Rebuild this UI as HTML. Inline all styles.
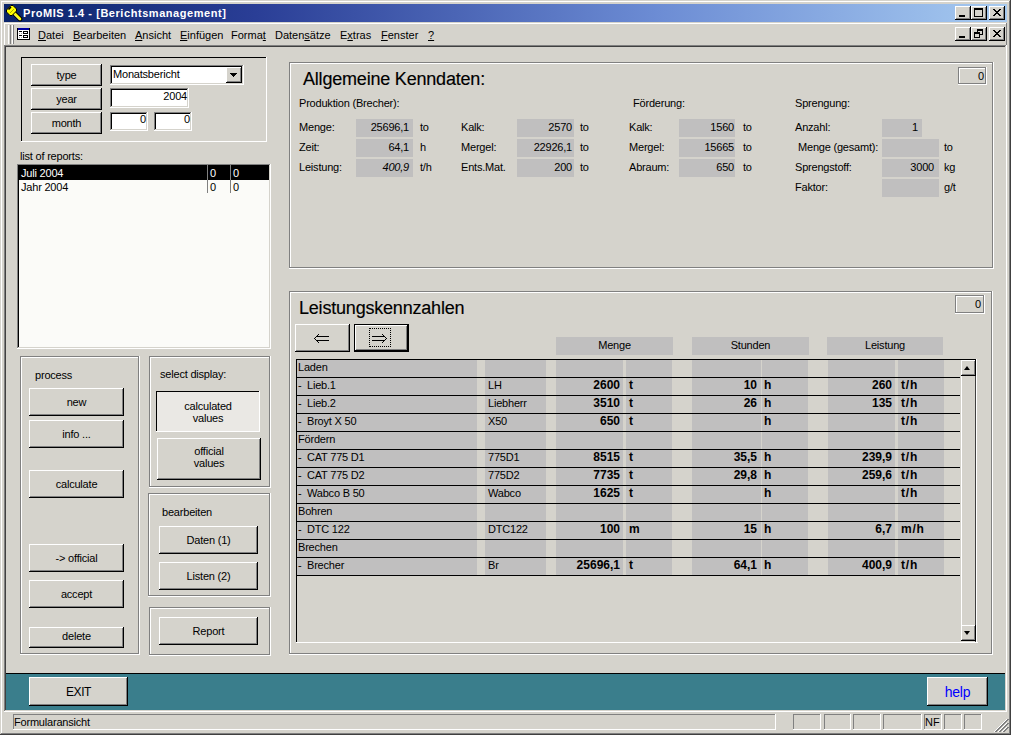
<!DOCTYPE html>
<html><head><meta charset="utf-8"><style>
html,body{margin:0;padding:0;}
body{width:1011px;height:735px;overflow:hidden;position:relative;background:#D5D3CC;font-family:"Liberation Sans", sans-serif;}
body div{position:absolute;}
u{text-decoration:underline;}
</style></head><body>
<div style="left:0px;top:0px;width:1011px;height:735px;background:#D5D3CC;"></div>
<div style="left:1px;top:1px;width:1008px;height:1px;background:#FFFFFF;"></div>
<div style="left:1px;top:1px;width:1px;height:732px;background:#FFFFFF;"></div>
<div style="left:1009px;top:1px;width:1px;height:733px;background:#808080;"></div>
<div style="left:1px;top:733px;width:1009px;height:1px;background:#808080;"></div>
<div style="left:1010px;top:0px;width:1px;height:735px;background:#404040;"></div>
<div style="left:0px;top:734px;width:1011px;height:1px;background:#404040;"></div>
<div style="left:4px;top:4px;width:1003px;height:18px;background:linear-gradient(to right,#0A246A 0%,rgb(42,62,150) 25%,rgb(108,140,212) 65%,#A6CAF0 100%);"></div>
<div style="left:23px;top:6px;font-size:11px;line-height:14px;color:#FFFFFF;font-weight:bold;white-space:nowrap;letter-spacing:0.55px;">ProMIS 1.4 - [Berichtsmanagement]</div>
<div style="left:955px;top:6px;width:16px;height:14px;background:#D5D3CC;"></div>
<div style="left:955px;top:6px;width:16px;height:1px;background:#FFFFFF;"></div>
<div style="left:955px;top:6px;width:1px;height:14px;background:#FFFFFF;"></div>
<div style="left:955px;top:19px;width:16px;height:1px;background:#000;"></div>
<div style="left:970px;top:6px;width:1px;height:14px;background:#000;"></div>
<div style="left:956px;top:18px;width:14px;height:1px;background:#808080;"></div>
<div style="left:969px;top:7px;width:1px;height:12px;background:#808080;"></div>
<div style="left:955px;top:27px;width:16px;height:14px;background:#D5D3CC;"></div>
<div style="left:955px;top:27px;width:16px;height:1px;background:#FFFFFF;"></div>
<div style="left:955px;top:27px;width:1px;height:14px;background:#FFFFFF;"></div>
<div style="left:955px;top:40px;width:16px;height:1px;background:#000;"></div>
<div style="left:970px;top:27px;width:1px;height:14px;background:#000;"></div>
<div style="left:956px;top:39px;width:14px;height:1px;background:#808080;"></div>
<div style="left:969px;top:28px;width:1px;height:12px;background:#808080;"></div>
<div style="left:971px;top:6px;width:16px;height:14px;background:#D5D3CC;"></div>
<div style="left:971px;top:6px;width:16px;height:1px;background:#FFFFFF;"></div>
<div style="left:971px;top:6px;width:1px;height:14px;background:#FFFFFF;"></div>
<div style="left:971px;top:19px;width:16px;height:1px;background:#000;"></div>
<div style="left:986px;top:6px;width:1px;height:14px;background:#000;"></div>
<div style="left:972px;top:18px;width:14px;height:1px;background:#808080;"></div>
<div style="left:985px;top:7px;width:1px;height:12px;background:#808080;"></div>
<div style="left:971px;top:27px;width:16px;height:14px;background:#D5D3CC;"></div>
<div style="left:971px;top:27px;width:16px;height:1px;background:#FFFFFF;"></div>
<div style="left:971px;top:27px;width:1px;height:14px;background:#FFFFFF;"></div>
<div style="left:971px;top:40px;width:16px;height:1px;background:#000;"></div>
<div style="left:986px;top:27px;width:1px;height:14px;background:#000;"></div>
<div style="left:972px;top:39px;width:14px;height:1px;background:#808080;"></div>
<div style="left:985px;top:28px;width:1px;height:12px;background:#808080;"></div>
<div style="left:989px;top:6px;width:16px;height:14px;background:#D5D3CC;"></div>
<div style="left:989px;top:6px;width:16px;height:1px;background:#FFFFFF;"></div>
<div style="left:989px;top:6px;width:1px;height:14px;background:#FFFFFF;"></div>
<div style="left:989px;top:19px;width:16px;height:1px;background:#000;"></div>
<div style="left:1004px;top:6px;width:1px;height:14px;background:#000;"></div>
<div style="left:990px;top:18px;width:14px;height:1px;background:#808080;"></div>
<div style="left:1003px;top:7px;width:1px;height:12px;background:#808080;"></div>
<div style="left:989px;top:27px;width:16px;height:14px;background:#D5D3CC;"></div>
<div style="left:989px;top:27px;width:16px;height:1px;background:#FFFFFF;"></div>
<div style="left:989px;top:27px;width:1px;height:14px;background:#FFFFFF;"></div>
<div style="left:989px;top:40px;width:16px;height:1px;background:#000;"></div>
<div style="left:1004px;top:27px;width:1px;height:14px;background:#000;"></div>
<div style="left:990px;top:39px;width:14px;height:1px;background:#808080;"></div>
<div style="left:1003px;top:28px;width:1px;height:12px;background:#808080;"></div>
<div style="left:4px;top:23px;width:1002px;height:1px;background:#FFFFFF;"></div>
<div style="left:1006px;top:23px;width:1px;height:22px;background:#808080;"></div>
<div style="left:38px;top:29px;font-size:11px;line-height:13px;color:#000;font-weight:normal;white-space:nowrap;"><u>D</u>atei</div>
<div style="left:73px;top:29px;font-size:11px;line-height:13px;color:#000;font-weight:normal;white-space:nowrap;"><u>B</u>earbeiten</div>
<div style="left:135px;top:29px;font-size:11px;line-height:13px;color:#000;font-weight:normal;white-space:nowrap;"><u>A</u>nsicht</div>
<div style="left:180px;top:29px;font-size:11px;line-height:13px;color:#000;font-weight:normal;white-space:nowrap;"><u>E</u>infügen</div>
<div style="left:231px;top:29px;font-size:11px;line-height:13px;color:#000;font-weight:normal;white-space:nowrap;">Forma<u>t</u></div>
<div style="left:275px;top:29px;font-size:11px;line-height:13px;color:#000;font-weight:normal;white-space:nowrap;">Daten<u>s</u>ätze</div>
<div style="left:340px;top:29px;font-size:11px;line-height:13px;color:#000;font-weight:normal;white-space:nowrap;">E<u>x</u>tras</div>
<div style="left:381px;top:29px;font-size:11px;line-height:13px;color:#000;font-weight:normal;white-space:nowrap;"><u>F</u>enster</div>
<div style="left:428px;top:29px;font-size:11px;line-height:13px;color:#000;font-weight:normal;white-space:nowrap;"><u>?</u></div>
<div style="left:4px;top:23px;width:1px;height:22px;background:#FFFFFF;"></div>
<div style="left:8px;top:25px;width:1px;height:19px;background:#FFFFFF;"></div>
<div style="left:10px;top:25px;width:1px;height:19px;background:#808080;"></div>
<div style="left:12px;top:25px;width:1px;height:19px;background:#FFFFFF;"></div>
<div style="left:13px;top:25px;width:1px;height:19px;background:#808080;"></div>
<div style="left:4px;top:45px;width:1002px;height:1px;background:#808080;"></div>
<div style="left:4px;top:45px;width:1px;height:667px;background:#808080;"></div>
<div style="left:5px;top:46px;width:1000px;height:1px;background:#404040;"></div>
<div style="left:5px;top:46px;width:1px;height:664px;background:#404040;"></div>
<div style="left:1006px;top:45px;width:1px;height:667px;background:#FFFFFF;"></div>
<div style="left:4px;top:711px;width:1003px;height:1px;background:#FFFFFF;"></div>
<div style="left:21px;top:57px;width:246px;height:1px;background:#000;"></div>
<div style="left:21px;top:57px;width:1px;height:85px;background:#000;"></div>
<div style="left:21px;top:141px;width:246px;height:1px;background:#FFFFFF;"></div>
<div style="left:266px;top:57px;width:1px;height:85px;background:#FFFFFF;"></div>
<div style="left:31px;top:64px;width:71px;height:22px;background:#D5D3CC;"></div>
<div style="left:31px;top:64px;width:71px;height:1px;background:#FFFFFF;"></div>
<div style="left:31px;top:64px;width:1px;height:22px;background:#FFFFFF;"></div>
<div style="left:31px;top:85px;width:71px;height:1px;background:#000;"></div>
<div style="left:101px;top:64px;width:1px;height:22px;background:#000;"></div>
<div style="left:32px;top:84px;width:69px;height:1px;background:#808080;"></div>
<div style="left:100px;top:65px;width:1px;height:20px;background:#808080;"></div>
<div style="left:31px;top:68px;width:71px;text-align:center;font-size:11px;line-height:14px;color:#000;font-weight:normal;white-space:nowrap;letter-spacing:-0.2px;">type</div>
<div style="left:31px;top:88px;width:71px;height:22px;background:#D5D3CC;"></div>
<div style="left:31px;top:88px;width:71px;height:1px;background:#FFFFFF;"></div>
<div style="left:31px;top:88px;width:1px;height:22px;background:#FFFFFF;"></div>
<div style="left:31px;top:109px;width:71px;height:1px;background:#000;"></div>
<div style="left:101px;top:88px;width:1px;height:22px;background:#000;"></div>
<div style="left:32px;top:108px;width:69px;height:1px;background:#808080;"></div>
<div style="left:100px;top:89px;width:1px;height:20px;background:#808080;"></div>
<div style="left:31px;top:92px;width:71px;text-align:center;font-size:11px;line-height:14px;color:#000;font-weight:normal;white-space:nowrap;letter-spacing:-0.2px;">year</div>
<div style="left:31px;top:112px;width:71px;height:22px;background:#D5D3CC;"></div>
<div style="left:31px;top:112px;width:71px;height:1px;background:#FFFFFF;"></div>
<div style="left:31px;top:112px;width:1px;height:22px;background:#FFFFFF;"></div>
<div style="left:31px;top:133px;width:71px;height:1px;background:#000;"></div>
<div style="left:101px;top:112px;width:1px;height:22px;background:#000;"></div>
<div style="left:32px;top:132px;width:69px;height:1px;background:#808080;"></div>
<div style="left:100px;top:113px;width:1px;height:20px;background:#808080;"></div>
<div style="left:31px;top:116px;width:71px;text-align:center;font-size:11px;line-height:14px;color:#000;font-weight:normal;white-space:nowrap;letter-spacing:-0.2px;">month</div>
<div style="left:110px;top:65px;width:134px;height:20px;background:#FFFFFF;"></div>
<div style="left:110px;top:65px;width:134px;height:1px;background:#808080;"></div>
<div style="left:110px;top:65px;width:1px;height:20px;background:#808080;"></div>
<div style="left:110px;top:84px;width:134px;height:1px;background:#FFFFFF;"></div>
<div style="left:243px;top:65px;width:1px;height:20px;background:#FFFFFF;"></div>
<div style="left:111px;top:66px;width:132px;height:1px;background:#000;"></div>
<div style="left:111px;top:66px;width:1px;height:18px;background:#000;"></div>
<div style="left:111px;top:83px;width:132px;height:1px;background:#D5D3CC;"></div>
<div style="left:242px;top:66px;width:1px;height:18px;background:#D5D3CC;"></div>
<div style="left:113px;top:67px;font-size:11px;line-height:14px;color:#000;font-weight:normal;white-space:nowrap;letter-spacing:-0.2px;">Monatsbericht</div>
<div style="left:226px;top:67px;width:16px;height:16px;background:#D5D3CC;"></div>
<div style="left:226px;top:67px;width:16px;height:1px;background:#FFFFFF;"></div>
<div style="left:226px;top:67px;width:1px;height:16px;background:#FFFFFF;"></div>
<div style="left:226px;top:82px;width:16px;height:1px;background:#000;"></div>
<div style="left:241px;top:67px;width:1px;height:16px;background:#000;"></div>
<div style="left:227px;top:81px;width:14px;height:1px;background:#808080;"></div>
<div style="left:240px;top:68px;width:1px;height:14px;background:#808080;"></div>
<svg style="position:absolute;left:230px;top:73px" width="7" height="4" viewBox="0 0 7 4" shape-rendering="crispEdges"><rect x="0" y="0" width="7" height="1" fill="#000"/><rect x="1" y="1" width="5" height="1" fill="#000"/><rect x="2" y="2" width="3" height="1" fill="#000"/><rect x="3" y="3" width="1" height="1" fill="#000"/></svg>
<div style="left:110px;top:88px;width:79px;height:20px;background:#FFFFFF;"></div>
<div style="left:110px;top:88px;width:79px;height:1px;background:#808080;"></div>
<div style="left:110px;top:88px;width:1px;height:20px;background:#808080;"></div>
<div style="left:110px;top:107px;width:79px;height:1px;background:#FFFFFF;"></div>
<div style="left:188px;top:88px;width:1px;height:20px;background:#FFFFFF;"></div>
<div style="left:111px;top:89px;width:77px;height:1px;background:#000;"></div>
<div style="left:111px;top:89px;width:1px;height:18px;background:#000;"></div>
<div style="left:111px;top:106px;width:77px;height:1px;background:#D5D3CC;"></div>
<div style="left:187px;top:89px;width:1px;height:18px;background:#D5D3CC;"></div>
<div style="left:-213px;top:89px;width:400px;text-align:right;font-size:11px;line-height:14px;color:#000;font-weight:normal;white-space:nowrap;letter-spacing:-0.2px;">2004</div>
<div style="left:110px;top:112px;width:38px;height:19px;background:#FFFFFF;"></div>
<div style="left:110px;top:112px;width:38px;height:1px;background:#808080;"></div>
<div style="left:110px;top:112px;width:1px;height:19px;background:#808080;"></div>
<div style="left:110px;top:130px;width:38px;height:1px;background:#FFFFFF;"></div>
<div style="left:147px;top:112px;width:1px;height:19px;background:#FFFFFF;"></div>
<div style="left:111px;top:113px;width:36px;height:1px;background:#000;"></div>
<div style="left:111px;top:113px;width:1px;height:17px;background:#000;"></div>
<div style="left:111px;top:129px;width:36px;height:1px;background:#D5D3CC;"></div>
<div style="left:146px;top:113px;width:1px;height:17px;background:#D5D3CC;"></div>
<div style="left:-254px;top:112px;width:400px;text-align:right;font-size:11px;line-height:14px;color:#000;font-weight:normal;white-space:nowrap;letter-spacing:-0.2px;">0</div>
<div style="left:154px;top:112px;width:38px;height:19px;background:#FFFFFF;"></div>
<div style="left:154px;top:112px;width:38px;height:1px;background:#808080;"></div>
<div style="left:154px;top:112px;width:1px;height:19px;background:#808080;"></div>
<div style="left:154px;top:130px;width:38px;height:1px;background:#FFFFFF;"></div>
<div style="left:191px;top:112px;width:1px;height:19px;background:#FFFFFF;"></div>
<div style="left:155px;top:113px;width:36px;height:1px;background:#000;"></div>
<div style="left:155px;top:113px;width:1px;height:17px;background:#000;"></div>
<div style="left:155px;top:129px;width:36px;height:1px;background:#D5D3CC;"></div>
<div style="left:190px;top:113px;width:1px;height:17px;background:#D5D3CC;"></div>
<div style="left:-210px;top:112px;width:400px;text-align:right;font-size:11px;line-height:14px;color:#000;font-weight:normal;white-space:nowrap;letter-spacing:-0.2px;">0</div>
<div style="left:20px;top:149px;font-size:11px;line-height:14px;color:#000;font-weight:normal;white-space:nowrap;letter-spacing:-0.2px;">list of reports:</div>
<div style="left:17px;top:164px;width:254px;height:185px;background:#FBFBF8;"></div>
<div style="left:17px;top:164px;width:254px;height:1px;background:#808080;"></div>
<div style="left:17px;top:164px;width:1px;height:185px;background:#808080;"></div>
<div style="left:17px;top:348px;width:254px;height:1px;background:#FFFFFF;"></div>
<div style="left:270px;top:164px;width:1px;height:185px;background:#FFFFFF;"></div>
<div style="left:18px;top:165px;width:252px;height:1px;background:#000;"></div>
<div style="left:18px;top:165px;width:1px;height:183px;background:#000;"></div>
<div style="left:18px;top:347px;width:252px;height:1px;background:#D5D3CC;"></div>
<div style="left:269px;top:165px;width:1px;height:183px;background:#D5D3CC;"></div>
<div style="left:19px;top:166px;width:250px;height:14px;background:#000;"></div>
<div style="left:21px;top:166px;font-size:11px;line-height:14px;color:#FFFFFF;font-weight:normal;white-space:nowrap;letter-spacing:-0.2px;">Juli 2004</div>
<div style="left:21px;top:180px;font-size:11px;line-height:14px;color:#000;font-weight:normal;white-space:nowrap;letter-spacing:-0.2px;">Jahr 2004</div>
<div style="left:207px;top:165px;width:1px;height:28px;background:#808080;"></div>
<div style="left:230px;top:165px;width:1px;height:28px;background:#808080;"></div>
<div style="left:210px;top:166px;font-size:11px;line-height:14px;color:#FFFFFF;font-weight:normal;white-space:nowrap;letter-spacing:-0.2px;">0</div>
<div style="left:233px;top:166px;font-size:11px;line-height:14px;color:#FFFFFF;font-weight:normal;white-space:nowrap;letter-spacing:-0.2px;">0</div>
<div style="left:210px;top:180px;font-size:11px;line-height:14px;color:#000;font-weight:normal;white-space:nowrap;letter-spacing:-0.2px;">0</div>
<div style="left:233px;top:180px;font-size:11px;line-height:14px;color:#000;font-weight:normal;white-space:nowrap;letter-spacing:-0.2px;">0</div>
<div style="left:20px;top:356px;width:120px;height:1px;background:#808080;"></div>
<div style="left:20px;top:356px;width:1px;height:299px;background:#808080;"></div>
<div style="left:20px;top:654px;width:120px;height:1px;background:#FFFFFF;"></div>
<div style="left:139px;top:356px;width:1px;height:299px;background:#FFFFFF;"></div>
<div style="left:21px;top:357px;width:118px;height:1px;background:#FFFFFF;"></div>
<div style="left:21px;top:357px;width:1px;height:297px;background:#FFFFFF;"></div>
<div style="left:21px;top:653px;width:118px;height:1px;background:#808080;"></div>
<div style="left:138px;top:357px;width:1px;height:297px;background:#808080;"></div>
<div style="left:35px;top:368px;font-size:11px;line-height:14px;color:#000;font-weight:normal;white-space:nowrap;letter-spacing:-0.2px;">process</div>
<div style="left:29px;top:388px;width:95px;height:28px;background:#D5D3CC;"></div>
<div style="left:29px;top:388px;width:95px;height:1px;background:#FFFFFF;"></div>
<div style="left:29px;top:388px;width:1px;height:28px;background:#FFFFFF;"></div>
<div style="left:29px;top:415px;width:95px;height:1px;background:#000;"></div>
<div style="left:123px;top:388px;width:1px;height:28px;background:#000;"></div>
<div style="left:30px;top:414px;width:93px;height:1px;background:#808080;"></div>
<div style="left:122px;top:389px;width:1px;height:26px;background:#808080;"></div>
<div style="left:29px;top:395px;width:95px;text-align:center;font-size:11px;line-height:14px;color:#000;font-weight:normal;white-space:nowrap;letter-spacing:-0.2px;">new</div>
<div style="left:29px;top:420px;width:95px;height:28px;background:#D5D3CC;"></div>
<div style="left:29px;top:420px;width:95px;height:1px;background:#FFFFFF;"></div>
<div style="left:29px;top:420px;width:1px;height:28px;background:#FFFFFF;"></div>
<div style="left:29px;top:447px;width:95px;height:1px;background:#000;"></div>
<div style="left:123px;top:420px;width:1px;height:28px;background:#000;"></div>
<div style="left:30px;top:446px;width:93px;height:1px;background:#808080;"></div>
<div style="left:122px;top:421px;width:1px;height:26px;background:#808080;"></div>
<div style="left:29px;top:427px;width:95px;text-align:center;font-size:11px;line-height:14px;color:#000;font-weight:normal;white-space:nowrap;letter-spacing:-0.2px;">info ...</div>
<div style="left:29px;top:470px;width:95px;height:28px;background:#D5D3CC;"></div>
<div style="left:29px;top:470px;width:95px;height:1px;background:#FFFFFF;"></div>
<div style="left:29px;top:470px;width:1px;height:28px;background:#FFFFFF;"></div>
<div style="left:29px;top:497px;width:95px;height:1px;background:#000;"></div>
<div style="left:123px;top:470px;width:1px;height:28px;background:#000;"></div>
<div style="left:30px;top:496px;width:93px;height:1px;background:#808080;"></div>
<div style="left:122px;top:471px;width:1px;height:26px;background:#808080;"></div>
<div style="left:29px;top:477px;width:95px;text-align:center;font-size:11px;line-height:14px;color:#000;font-weight:normal;white-space:nowrap;letter-spacing:-0.2px;">calculate</div>
<div style="left:29px;top:544px;width:95px;height:28px;background:#D5D3CC;"></div>
<div style="left:29px;top:544px;width:95px;height:1px;background:#FFFFFF;"></div>
<div style="left:29px;top:544px;width:1px;height:28px;background:#FFFFFF;"></div>
<div style="left:29px;top:571px;width:95px;height:1px;background:#000;"></div>
<div style="left:123px;top:544px;width:1px;height:28px;background:#000;"></div>
<div style="left:30px;top:570px;width:93px;height:1px;background:#808080;"></div>
<div style="left:122px;top:545px;width:1px;height:26px;background:#808080;"></div>
<div style="left:29px;top:551px;width:95px;text-align:center;font-size:11px;line-height:14px;color:#000;font-weight:normal;white-space:nowrap;letter-spacing:-0.2px;">-&gt; official</div>
<div style="left:29px;top:580px;width:95px;height:28px;background:#D5D3CC;"></div>
<div style="left:29px;top:580px;width:95px;height:1px;background:#FFFFFF;"></div>
<div style="left:29px;top:580px;width:1px;height:28px;background:#FFFFFF;"></div>
<div style="left:29px;top:607px;width:95px;height:1px;background:#000;"></div>
<div style="left:123px;top:580px;width:1px;height:28px;background:#000;"></div>
<div style="left:30px;top:606px;width:93px;height:1px;background:#808080;"></div>
<div style="left:122px;top:581px;width:1px;height:26px;background:#808080;"></div>
<div style="left:29px;top:587px;width:95px;text-align:center;font-size:11px;line-height:14px;color:#000;font-weight:normal;white-space:nowrap;letter-spacing:-0.2px;">accept</div>
<div style="left:29px;top:627px;width:95px;height:21px;background:#D5D3CC;"></div>
<div style="left:29px;top:627px;width:95px;height:1px;background:#FFFFFF;"></div>
<div style="left:29px;top:627px;width:1px;height:21px;background:#FFFFFF;"></div>
<div style="left:29px;top:647px;width:95px;height:1px;background:#000;"></div>
<div style="left:123px;top:627px;width:1px;height:21px;background:#000;"></div>
<div style="left:30px;top:646px;width:93px;height:1px;background:#808080;"></div>
<div style="left:122px;top:628px;width:1px;height:19px;background:#808080;"></div>
<div style="left:29px;top:629px;width:95px;text-align:center;font-size:11px;line-height:14px;color:#000;font-weight:normal;white-space:nowrap;letter-spacing:-0.2px;">delete</div>
<div style="left:149px;top:356px;width:122px;height:1px;background:#808080;"></div>
<div style="left:149px;top:356px;width:1px;height:132px;background:#808080;"></div>
<div style="left:149px;top:487px;width:122px;height:1px;background:#FFFFFF;"></div>
<div style="left:270px;top:356px;width:1px;height:132px;background:#FFFFFF;"></div>
<div style="left:150px;top:357px;width:120px;height:1px;background:#FFFFFF;"></div>
<div style="left:150px;top:357px;width:1px;height:130px;background:#FFFFFF;"></div>
<div style="left:150px;top:486px;width:120px;height:1px;background:#808080;"></div>
<div style="left:269px;top:357px;width:1px;height:130px;background:#808080;"></div>
<div style="left:160px;top:367px;font-size:11px;line-height:14px;color:#000;font-weight:normal;white-space:nowrap;letter-spacing:-0.2px;">select display:</div>
<div style="left:156px;top:391px;width:104px;height:41px;background:#EAE8E4;"></div>
<div style="left:156px;top:391px;width:104px;height:1px;background:#000;"></div>
<div style="left:156px;top:391px;width:1px;height:41px;background:#000;"></div>
<div style="left:156px;top:431px;width:104px;height:1px;background:#FFFFFF;"></div>
<div style="left:259px;top:391px;width:1px;height:41px;background:#FFFFFF;"></div>
<div style="left:156px;top:399px;width:104px;text-align:center;font-size:11px;line-height:14px;color:#000;font-weight:normal;white-space:nowrap;letter-spacing:-0.2px;">calculated</div>
<div style="left:156px;top:411px;width:104px;text-align:center;font-size:11px;line-height:14px;color:#000;font-weight:normal;white-space:nowrap;letter-spacing:-0.2px;">values</div>
<div style="left:157px;top:438px;width:104px;height:42px;background:#D5D3CC;"></div>
<div style="left:157px;top:438px;width:104px;height:1px;background:#FFFFFF;"></div>
<div style="left:157px;top:438px;width:1px;height:42px;background:#FFFFFF;"></div>
<div style="left:157px;top:479px;width:104px;height:1px;background:#000;"></div>
<div style="left:260px;top:438px;width:1px;height:42px;background:#000;"></div>
<div style="left:158px;top:478px;width:102px;height:1px;background:#808080;"></div>
<div style="left:259px;top:439px;width:1px;height:40px;background:#808080;"></div>
<div style="left:157px;top:444px;width:104px;text-align:center;font-size:11px;line-height:14px;color:#000;font-weight:normal;white-space:nowrap;letter-spacing:-0.2px;">official</div>
<div style="left:157px;top:456px;width:104px;text-align:center;font-size:11px;line-height:14px;color:#000;font-weight:normal;white-space:nowrap;letter-spacing:-0.2px;">values</div>
<div style="left:148px;top:493px;width:123px;height:1px;background:#808080;"></div>
<div style="left:148px;top:493px;width:1px;height:104px;background:#808080;"></div>
<div style="left:148px;top:596px;width:123px;height:1px;background:#FFFFFF;"></div>
<div style="left:270px;top:493px;width:1px;height:104px;background:#FFFFFF;"></div>
<div style="left:149px;top:494px;width:121px;height:1px;background:#FFFFFF;"></div>
<div style="left:149px;top:494px;width:1px;height:102px;background:#FFFFFF;"></div>
<div style="left:149px;top:595px;width:121px;height:1px;background:#808080;"></div>
<div style="left:269px;top:494px;width:1px;height:102px;background:#808080;"></div>
<div style="left:162px;top:505px;font-size:11px;line-height:14px;color:#000;font-weight:normal;white-space:nowrap;letter-spacing:-0.2px;">bearbeiten</div>
<div style="left:159px;top:526px;width:99px;height:28px;background:#D5D3CC;"></div>
<div style="left:159px;top:526px;width:99px;height:1px;background:#FFFFFF;"></div>
<div style="left:159px;top:526px;width:1px;height:28px;background:#FFFFFF;"></div>
<div style="left:159px;top:553px;width:99px;height:1px;background:#000;"></div>
<div style="left:257px;top:526px;width:1px;height:28px;background:#000;"></div>
<div style="left:160px;top:552px;width:97px;height:1px;background:#808080;"></div>
<div style="left:256px;top:527px;width:1px;height:26px;background:#808080;"></div>
<div style="left:159px;top:533px;width:99px;text-align:center;font-size:11px;line-height:14px;color:#000;font-weight:normal;white-space:nowrap;letter-spacing:-0.2px;">Daten (1)</div>
<div style="left:159px;top:562px;width:99px;height:28px;background:#D5D3CC;"></div>
<div style="left:159px;top:562px;width:99px;height:1px;background:#FFFFFF;"></div>
<div style="left:159px;top:562px;width:1px;height:28px;background:#FFFFFF;"></div>
<div style="left:159px;top:589px;width:99px;height:1px;background:#000;"></div>
<div style="left:257px;top:562px;width:1px;height:28px;background:#000;"></div>
<div style="left:160px;top:588px;width:97px;height:1px;background:#808080;"></div>
<div style="left:256px;top:563px;width:1px;height:26px;background:#808080;"></div>
<div style="left:159px;top:569px;width:99px;text-align:center;font-size:11px;line-height:14px;color:#000;font-weight:normal;white-space:nowrap;letter-spacing:-0.2px;">Listen (2)</div>
<div style="left:149px;top:607px;width:122px;height:1px;background:#808080;"></div>
<div style="left:149px;top:607px;width:1px;height:49px;background:#808080;"></div>
<div style="left:149px;top:655px;width:122px;height:1px;background:#FFFFFF;"></div>
<div style="left:270px;top:607px;width:1px;height:49px;background:#FFFFFF;"></div>
<div style="left:150px;top:608px;width:120px;height:1px;background:#FFFFFF;"></div>
<div style="left:150px;top:608px;width:1px;height:47px;background:#FFFFFF;"></div>
<div style="left:150px;top:654px;width:120px;height:1px;background:#808080;"></div>
<div style="left:269px;top:608px;width:1px;height:47px;background:#808080;"></div>
<div style="left:159px;top:617px;width:99px;height:28px;background:#D5D3CC;"></div>
<div style="left:159px;top:617px;width:99px;height:1px;background:#FFFFFF;"></div>
<div style="left:159px;top:617px;width:1px;height:28px;background:#FFFFFF;"></div>
<div style="left:159px;top:644px;width:99px;height:1px;background:#000;"></div>
<div style="left:257px;top:617px;width:1px;height:28px;background:#000;"></div>
<div style="left:160px;top:643px;width:97px;height:1px;background:#808080;"></div>
<div style="left:256px;top:618px;width:1px;height:26px;background:#808080;"></div>
<div style="left:159px;top:624px;width:99px;text-align:center;font-size:11px;line-height:14px;color:#000;font-weight:normal;white-space:nowrap;letter-spacing:-0.2px;">Report</div>
<div style="left:289px;top:62px;width:705px;height:1px;background:#808080;"></div>
<div style="left:289px;top:62px;width:1px;height:207px;background:#808080;"></div>
<div style="left:289px;top:268px;width:705px;height:1px;background:#FFFFFF;"></div>
<div style="left:993px;top:62px;width:1px;height:207px;background:#FFFFFF;"></div>
<div style="left:290px;top:63px;width:703px;height:1px;background:#FFFFFF;"></div>
<div style="left:290px;top:63px;width:1px;height:205px;background:#FFFFFF;"></div>
<div style="left:290px;top:267px;width:703px;height:1px;background:#808080;"></div>
<div style="left:992px;top:63px;width:1px;height:205px;background:#808080;"></div>
<div style="left:958px;top:67px;width:29px;height:1px;background:#808080;"></div>
<div style="left:958px;top:67px;width:1px;height:18px;background:#808080;"></div>
<div style="left:958px;top:84px;width:29px;height:1px;background:#FFFFFF;"></div>
<div style="left:986px;top:67px;width:1px;height:18px;background:#FFFFFF;"></div>
<div style="left:959px;top:68px;width:27px;height:1px;background:#FFFFFF;"></div>
<div style="left:959px;top:68px;width:1px;height:16px;background:#FFFFFF;"></div>
<div style="left:959px;top:83px;width:27px;height:1px;background:#808080;"></div>
<div style="left:985px;top:68px;width:1px;height:16px;background:#808080;"></div>
<div style="left:584px;top:69px;width:400px;text-align:right;font-size:11px;line-height:14px;color:#000;font-weight:normal;white-space:nowrap;letter-spacing:-0.2px;">0</div>
<div style="left:303px;top:69px;font-size:18px;line-height:21px;color:#000;font-weight:normal;white-space:nowrap;letter-spacing:-0.2px;-webkit-text-stroke:0.15px #000;">Allgemeine Kenndaten:</div>
<div style="left:299px;top:96px;font-size:11px;line-height:14px;color:#000;font-weight:normal;white-space:nowrap;letter-spacing:-0.2px;">Produktion (Brecher):</div>
<div style="left:633px;top:96px;font-size:11px;line-height:14px;color:#000;font-weight:normal;white-space:nowrap;letter-spacing:-0.2px;">Förderung:</div>
<div style="left:795px;top:96px;font-size:11px;line-height:14px;color:#000;font-weight:normal;white-space:nowrap;letter-spacing:-0.2px;">Sprengung:</div>
<div style="left:299px;top:120px;font-size:11px;line-height:14px;color:#000;font-weight:normal;white-space:nowrap;letter-spacing:-0.2px;">Menge:</div>
<div style="left:356px;top:119px;width:57px;height:18px;background:#C0BFBF;"></div>
<div style="left:9px;top:120px;width:400px;text-align:right;font-size:11px;line-height:14px;color:#000;font-weight:normal;white-space:nowrap;letter-spacing:-0.2px;">25696,1</div>
<div style="left:420px;top:120px;font-size:11px;line-height:14px;color:#000;font-weight:normal;white-space:nowrap;letter-spacing:-0.2px;">to</div>
<div style="left:299px;top:140px;font-size:11px;line-height:14px;color:#000;font-weight:normal;white-space:nowrap;letter-spacing:-0.2px;">Zeit:</div>
<div style="left:356px;top:139px;width:57px;height:18px;background:#C0BFBF;"></div>
<div style="left:9px;top:140px;width:400px;text-align:right;font-size:11px;line-height:14px;color:#000;font-weight:normal;white-space:nowrap;letter-spacing:-0.2px;">64,1</div>
<div style="left:420px;top:140px;font-size:11px;line-height:14px;color:#000;font-weight:normal;white-space:nowrap;letter-spacing:-0.2px;">h</div>
<div style="left:299px;top:160px;font-size:11px;line-height:14px;color:#000;font-weight:normal;white-space:nowrap;letter-spacing:-0.2px;">Leistung:</div>
<div style="left:356px;top:159px;width:57px;height:18px;background:#C0BFBF;"></div>
<div style="left:9px;top:160px;width:400px;text-align:right;font-size:11px;line-height:14px;color:#000;font-weight:normal;white-space:nowrap;letter-spacing:-0.2px;font-style:italic;">400,9</div>
<div style="left:420px;top:160px;font-size:11px;line-height:14px;color:#000;font-weight:normal;white-space:nowrap;letter-spacing:-0.2px;">t/h</div>
<div style="left:461px;top:120px;font-size:11px;line-height:14px;color:#000;font-weight:normal;white-space:nowrap;letter-spacing:-0.2px;">Kalk:</div>
<div style="left:517px;top:119px;width:57px;height:18px;background:#C0BFBF;"></div>
<div style="left:172px;top:120px;width:400px;text-align:right;font-size:11px;line-height:14px;color:#000;font-weight:normal;white-space:nowrap;letter-spacing:-0.2px;">2570</div>
<div style="left:580px;top:120px;font-size:11px;line-height:14px;color:#000;font-weight:normal;white-space:nowrap;letter-spacing:-0.2px;">to</div>
<div style="left:461px;top:140px;font-size:11px;line-height:14px;color:#000;font-weight:normal;white-space:nowrap;letter-spacing:-0.2px;">Mergel:</div>
<div style="left:517px;top:139px;width:57px;height:18px;background:#C0BFBF;"></div>
<div style="left:172px;top:140px;width:400px;text-align:right;font-size:11px;line-height:14px;color:#000;font-weight:normal;white-space:nowrap;letter-spacing:-0.2px;">22926,1</div>
<div style="left:580px;top:140px;font-size:11px;line-height:14px;color:#000;font-weight:normal;white-space:nowrap;letter-spacing:-0.2px;">to</div>
<div style="left:461px;top:160px;font-size:11px;line-height:14px;color:#000;font-weight:normal;white-space:nowrap;letter-spacing:-0.2px;">Ents.Mat.</div>
<div style="left:517px;top:159px;width:57px;height:18px;background:#C0BFBF;"></div>
<div style="left:172px;top:160px;width:400px;text-align:right;font-size:11px;line-height:14px;color:#000;font-weight:normal;white-space:nowrap;letter-spacing:-0.2px;">200</div>
<div style="left:580px;top:160px;font-size:11px;line-height:14px;color:#000;font-weight:normal;white-space:nowrap;letter-spacing:-0.2px;">to</div>
<div style="left:629px;top:120px;font-size:11px;line-height:14px;color:#000;font-weight:normal;white-space:nowrap;letter-spacing:-0.2px;">Kalk:</div>
<div style="left:679px;top:119px;width:56px;height:18px;background:#C0BFBF;"></div>
<div style="left:334px;top:120px;width:400px;text-align:right;font-size:11px;line-height:14px;color:#000;font-weight:normal;white-space:nowrap;letter-spacing:-0.2px;">1560</div>
<div style="left:743px;top:120px;font-size:11px;line-height:14px;color:#000;font-weight:normal;white-space:nowrap;letter-spacing:-0.2px;">to</div>
<div style="left:629px;top:140px;font-size:11px;line-height:14px;color:#000;font-weight:normal;white-space:nowrap;letter-spacing:-0.2px;">Mergel:</div>
<div style="left:679px;top:139px;width:56px;height:18px;background:#C0BFBF;"></div>
<div style="left:334px;top:140px;width:400px;text-align:right;font-size:11px;line-height:14px;color:#000;font-weight:normal;white-space:nowrap;letter-spacing:-0.2px;">15665</div>
<div style="left:743px;top:140px;font-size:11px;line-height:14px;color:#000;font-weight:normal;white-space:nowrap;letter-spacing:-0.2px;">to</div>
<div style="left:629px;top:160px;font-size:11px;line-height:14px;color:#000;font-weight:normal;white-space:nowrap;letter-spacing:-0.2px;">Abraum:</div>
<div style="left:679px;top:159px;width:56px;height:18px;background:#C0BFBF;"></div>
<div style="left:334px;top:160px;width:400px;text-align:right;font-size:11px;line-height:14px;color:#000;font-weight:normal;white-space:nowrap;letter-spacing:-0.2px;">650</div>
<div style="left:743px;top:160px;font-size:11px;line-height:14px;color:#000;font-weight:normal;white-space:nowrap;letter-spacing:-0.2px;">to</div>
<div style="left:795px;top:120px;font-size:11px;line-height:14px;color:#000;font-weight:normal;white-space:nowrap;letter-spacing:-0.2px;">Anzahl:</div>
<div style="left:882px;top:119px;width:40px;height:18px;background:#C0BFBF;"></div>
<div style="left:518px;top:120px;width:400px;text-align:right;font-size:11px;line-height:14px;color:#000;font-weight:normal;white-space:nowrap;letter-spacing:-0.2px;">1</div>
<div style="left:798px;top:140px;font-size:11px;line-height:14px;color:#000;font-weight:normal;white-space:nowrap;letter-spacing:-0.2px;">Menge (gesamt):</div>
<div style="left:882px;top:139px;width:57px;height:18px;background:#C0BFBF;"></div>
<div style="left:944px;top:140px;font-size:11px;line-height:14px;color:#000;font-weight:normal;white-space:nowrap;letter-spacing:-0.2px;">to</div>
<div style="left:795px;top:160px;font-size:11px;line-height:14px;color:#000;font-weight:normal;white-space:nowrap;letter-spacing:-0.2px;">Sprengstoff:</div>
<div style="left:882px;top:159px;width:57px;height:18px;background:#C0BFBF;"></div>
<div style="left:534px;top:160px;width:400px;text-align:right;font-size:11px;line-height:14px;color:#000;font-weight:normal;white-space:nowrap;letter-spacing:-0.2px;">3000</div>
<div style="left:944px;top:160px;font-size:11px;line-height:14px;color:#000;font-weight:normal;white-space:nowrap;letter-spacing:-0.2px;">kg</div>
<div style="left:795px;top:180px;font-size:11px;line-height:14px;color:#000;font-weight:normal;white-space:nowrap;letter-spacing:-0.2px;">Faktor:</div>
<div style="left:882px;top:179px;width:57px;height:18px;background:#C0BFBF;"></div>
<div style="left:944px;top:180px;font-size:11px;line-height:14px;color:#000;font-weight:normal;white-space:nowrap;letter-spacing:-0.2px;">g/t</div>
<div style="left:289px;top:291px;width:704px;height:1px;background:#808080;"></div>
<div style="left:289px;top:291px;width:1px;height:364px;background:#808080;"></div>
<div style="left:289px;top:654px;width:704px;height:1px;background:#FFFFFF;"></div>
<div style="left:992px;top:291px;width:1px;height:364px;background:#FFFFFF;"></div>
<div style="left:290px;top:292px;width:702px;height:1px;background:#FFFFFF;"></div>
<div style="left:290px;top:292px;width:1px;height:362px;background:#FFFFFF;"></div>
<div style="left:290px;top:653px;width:702px;height:1px;background:#808080;"></div>
<div style="left:991px;top:292px;width:1px;height:362px;background:#808080;"></div>
<div style="left:955px;top:295px;width:30px;height:1px;background:#808080;"></div>
<div style="left:955px;top:295px;width:1px;height:19px;background:#808080;"></div>
<div style="left:955px;top:313px;width:30px;height:1px;background:#FFFFFF;"></div>
<div style="left:984px;top:295px;width:1px;height:19px;background:#FFFFFF;"></div>
<div style="left:956px;top:296px;width:28px;height:1px;background:#FFFFFF;"></div>
<div style="left:956px;top:296px;width:1px;height:17px;background:#FFFFFF;"></div>
<div style="left:956px;top:312px;width:28px;height:1px;background:#808080;"></div>
<div style="left:983px;top:296px;width:1px;height:17px;background:#808080;"></div>
<div style="left:581px;top:297px;width:400px;text-align:right;font-size:11px;line-height:14px;color:#000;font-weight:normal;white-space:nowrap;letter-spacing:-0.2px;">0</div>
<div style="left:299px;top:298px;font-size:18px;line-height:21px;color:#000;font-weight:normal;white-space:nowrap;letter-spacing:-0.2px;-webkit-text-stroke:0.15px #000;">Leistungskennzahlen</div>
<div style="left:295px;top:324px;width:55px;height:28px;background:#D5D3CC;"></div>
<div style="left:295px;top:324px;width:55px;height:1px;background:#FFFFFF;"></div>
<div style="left:295px;top:324px;width:1px;height:28px;background:#FFFFFF;"></div>
<div style="left:295px;top:351px;width:55px;height:1px;background:#000;"></div>
<div style="left:349px;top:324px;width:1px;height:28px;background:#000;"></div>
<div style="left:296px;top:350px;width:53px;height:1px;background:#808080;"></div>
<div style="left:348px;top:325px;width:1px;height:26px;background:#808080;"></div>
<div style="left:354px;top:324px;width:55px;height:28px;background:#000;"></div>
<div style="left:355px;top:325px;width:53px;height:26px;background:#D5D3CC;"></div>
<div style="left:355px;top:325px;width:53px;height:1px;background:#FFFFFF;"></div>
<div style="left:355px;top:325px;width:1px;height:26px;background:#FFFFFF;"></div>
<div style="left:355px;top:350px;width:53px;height:1px;background:#000;"></div>
<div style="left:407px;top:325px;width:1px;height:26px;background:#000;"></div>
<div style="left:356px;top:349px;width:51px;height:1px;background:#808080;"></div>
<div style="left:406px;top:326px;width:1px;height:24px;background:#808080;"></div>
<div style="left:369px;top:328px;width:20px;height:17px;border:1px dotted #000;"></div>
<div style="left:556px;top:337px;width:117px;height:18px;background:#C0BFBF;"></div>
<div style="left:556px;top:338px;width:117px;text-align:center;font-size:11px;line-height:14px;color:#000;font-weight:normal;white-space:nowrap;letter-spacing:-0.2px;">Menge</div>
<div style="left:692px;top:337px;width:117px;height:18px;background:#C0BFBF;"></div>
<div style="left:692px;top:338px;width:117px;text-align:center;font-size:11px;line-height:14px;color:#000;font-weight:normal;white-space:nowrap;letter-spacing:-0.2px;">Stunden</div>
<div style="left:827px;top:337px;width:116px;height:18px;background:#C0BFBF;"></div>
<div style="left:827px;top:338px;width:116px;text-align:center;font-size:11px;line-height:14px;color:#000;font-weight:normal;white-space:nowrap;letter-spacing:-0.2px;">Leistung</div>
<div style="left:296px;top:359px;width:681px;height:1px;background:#000;"></div>
<div style="left:296px;top:359px;width:1px;height:284px;background:#000;"></div>
<div style="left:296px;top:642px;width:682px;height:1px;background:#FFFFFF;"></div>
<div style="left:976px;top:359px;width:1px;height:284px;background:#FFFFFF;"></div>
<div style="left:975px;top:360px;width:1px;height:282px;background:#404040;"></div>
<div style="left:297px;top:360px;width:180px;height:17px;background:#C0BFBF;"></div>
<div style="left:485px;top:360px;width:61px;height:17px;background:#C0BFBF;"></div>
<div style="left:556px;top:360px;width:67px;height:17px;background:#C0BFBF;"></div>
<div style="left:626px;top:360px;width:46px;height:17px;background:#C0BFBF;"></div>
<div style="left:692px;top:360px;width:69px;height:17px;background:#C0BFBF;"></div>
<div style="left:762px;top:360px;width:46px;height:17px;background:#C0BFBF;"></div>
<div style="left:828px;top:360px;width:67px;height:17px;background:#C0BFBF;"></div>
<div style="left:898px;top:360px;width:46px;height:17px;background:#C0BFBF;"></div>
<div style="left:296px;top:377px;width:664px;height:1px;background:#000;"></div>
<div style="left:298px;top:360px;font-size:11px;line-height:14px;color:#000;font-weight:normal;white-space:nowrap;letter-spacing:-0.2px;">Laden</div>
<div style="left:297px;top:378px;width:180px;height:17px;background:#C0BFBF;"></div>
<div style="left:485px;top:378px;width:61px;height:17px;background:#C0BFBF;"></div>
<div style="left:556px;top:378px;width:67px;height:17px;background:#C0BFBF;"></div>
<div style="left:626px;top:378px;width:46px;height:17px;background:#C0BFBF;"></div>
<div style="left:692px;top:378px;width:69px;height:17px;background:#C0BFBF;"></div>
<div style="left:762px;top:378px;width:46px;height:17px;background:#C0BFBF;"></div>
<div style="left:828px;top:378px;width:67px;height:17px;background:#C0BFBF;"></div>
<div style="left:898px;top:378px;width:46px;height:17px;background:#C0BFBF;"></div>
<div style="left:296px;top:395px;width:664px;height:1px;background:#000;"></div>
<div style="left:298px;top:378px;font-size:11px;line-height:14px;color:#000;font-weight:normal;white-space:nowrap;letter-spacing:-0.2px;">-</div>
<div style="left:307px;top:378px;font-size:11px;line-height:14px;color:#000;font-weight:normal;white-space:nowrap;letter-spacing:-0.2px;">Lieb.1</div>
<div style="left:488px;top:378px;font-size:11px;line-height:14px;color:#000;font-weight:normal;white-space:nowrap;letter-spacing:-0.2px;">LH</div>
<div style="left:220px;top:378px;width:400px;text-align:right;font-size:12px;line-height:15px;color:#000;font-weight:bold;white-space:nowrap;">2600</div>
<div style="left:629px;top:378px;font-size:12px;line-height:15px;color:#000;font-weight:bold;white-space:nowrap;">t</div>
<div style="left:357px;top:378px;width:400px;text-align:right;font-size:12px;line-height:15px;color:#000;font-weight:bold;white-space:nowrap;">10</div>
<div style="left:764px;top:378px;font-size:12px;line-height:15px;color:#000;font-weight:bold;white-space:nowrap;">h</div>
<div style="left:492px;top:378px;width:400px;text-align:right;font-size:12px;line-height:15px;color:#000;font-weight:bold;white-space:nowrap;">260</div>
<div style="left:901px;top:378px;font-size:12px;line-height:15px;color:#000;font-weight:bold;white-space:nowrap;letter-spacing:0.8px;">t/h</div>
<div style="left:297px;top:396px;width:180px;height:17px;background:#C0BFBF;"></div>
<div style="left:485px;top:396px;width:61px;height:17px;background:#C0BFBF;"></div>
<div style="left:556px;top:396px;width:67px;height:17px;background:#C0BFBF;"></div>
<div style="left:626px;top:396px;width:46px;height:17px;background:#C0BFBF;"></div>
<div style="left:692px;top:396px;width:69px;height:17px;background:#C0BFBF;"></div>
<div style="left:762px;top:396px;width:46px;height:17px;background:#C0BFBF;"></div>
<div style="left:828px;top:396px;width:67px;height:17px;background:#C0BFBF;"></div>
<div style="left:898px;top:396px;width:46px;height:17px;background:#C0BFBF;"></div>
<div style="left:296px;top:413px;width:664px;height:1px;background:#000;"></div>
<div style="left:298px;top:396px;font-size:11px;line-height:14px;color:#000;font-weight:normal;white-space:nowrap;letter-spacing:-0.2px;">-</div>
<div style="left:307px;top:396px;font-size:11px;line-height:14px;color:#000;font-weight:normal;white-space:nowrap;letter-spacing:-0.2px;">Lieb.2</div>
<div style="left:488px;top:396px;font-size:11px;line-height:14px;color:#000;font-weight:normal;white-space:nowrap;letter-spacing:-0.2px;">Liebherr</div>
<div style="left:220px;top:396px;width:400px;text-align:right;font-size:12px;line-height:15px;color:#000;font-weight:bold;white-space:nowrap;">3510</div>
<div style="left:629px;top:396px;font-size:12px;line-height:15px;color:#000;font-weight:bold;white-space:nowrap;">t</div>
<div style="left:357px;top:396px;width:400px;text-align:right;font-size:12px;line-height:15px;color:#000;font-weight:bold;white-space:nowrap;">26</div>
<div style="left:764px;top:396px;font-size:12px;line-height:15px;color:#000;font-weight:bold;white-space:nowrap;">h</div>
<div style="left:492px;top:396px;width:400px;text-align:right;font-size:12px;line-height:15px;color:#000;font-weight:bold;white-space:nowrap;">135</div>
<div style="left:901px;top:396px;font-size:12px;line-height:15px;color:#000;font-weight:bold;white-space:nowrap;letter-spacing:0.8px;">t/h</div>
<div style="left:297px;top:414px;width:180px;height:17px;background:#C0BFBF;"></div>
<div style="left:485px;top:414px;width:61px;height:17px;background:#C0BFBF;"></div>
<div style="left:556px;top:414px;width:67px;height:17px;background:#C0BFBF;"></div>
<div style="left:626px;top:414px;width:46px;height:17px;background:#C0BFBF;"></div>
<div style="left:692px;top:414px;width:69px;height:17px;background:#C0BFBF;"></div>
<div style="left:762px;top:414px;width:46px;height:17px;background:#C0BFBF;"></div>
<div style="left:828px;top:414px;width:67px;height:17px;background:#C0BFBF;"></div>
<div style="left:898px;top:414px;width:46px;height:17px;background:#C0BFBF;"></div>
<div style="left:296px;top:431px;width:664px;height:1px;background:#000;"></div>
<div style="left:298px;top:414px;font-size:11px;line-height:14px;color:#000;font-weight:normal;white-space:nowrap;letter-spacing:-0.2px;">-</div>
<div style="left:307px;top:414px;font-size:11px;line-height:14px;color:#000;font-weight:normal;white-space:nowrap;letter-spacing:-0.2px;">Broyt X 50</div>
<div style="left:488px;top:414px;font-size:11px;line-height:14px;color:#000;font-weight:normal;white-space:nowrap;letter-spacing:-0.2px;">X50</div>
<div style="left:220px;top:414px;width:400px;text-align:right;font-size:12px;line-height:15px;color:#000;font-weight:bold;white-space:nowrap;">650</div>
<div style="left:629px;top:414px;font-size:12px;line-height:15px;color:#000;font-weight:bold;white-space:nowrap;">t</div>
<div style="left:357px;top:414px;width:400px;text-align:right;font-size:12px;line-height:15px;color:#000;font-weight:bold;white-space:nowrap;"></div>
<div style="left:764px;top:414px;font-size:12px;line-height:15px;color:#000;font-weight:bold;white-space:nowrap;">h</div>
<div style="left:492px;top:414px;width:400px;text-align:right;font-size:12px;line-height:15px;color:#000;font-weight:bold;white-space:nowrap;"></div>
<div style="left:901px;top:414px;font-size:12px;line-height:15px;color:#000;font-weight:bold;white-space:nowrap;letter-spacing:0.8px;">t/h</div>
<div style="left:297px;top:432px;width:180px;height:17px;background:#C0BFBF;"></div>
<div style="left:485px;top:432px;width:61px;height:17px;background:#C0BFBF;"></div>
<div style="left:556px;top:432px;width:67px;height:17px;background:#C0BFBF;"></div>
<div style="left:626px;top:432px;width:46px;height:17px;background:#C0BFBF;"></div>
<div style="left:692px;top:432px;width:69px;height:17px;background:#C0BFBF;"></div>
<div style="left:762px;top:432px;width:46px;height:17px;background:#C0BFBF;"></div>
<div style="left:828px;top:432px;width:67px;height:17px;background:#C0BFBF;"></div>
<div style="left:898px;top:432px;width:46px;height:17px;background:#C0BFBF;"></div>
<div style="left:296px;top:449px;width:664px;height:1px;background:#000;"></div>
<div style="left:298px;top:432px;font-size:11px;line-height:14px;color:#000;font-weight:normal;white-space:nowrap;letter-spacing:-0.2px;">Fördern</div>
<div style="left:297px;top:450px;width:180px;height:17px;background:#C0BFBF;"></div>
<div style="left:485px;top:450px;width:61px;height:17px;background:#C0BFBF;"></div>
<div style="left:556px;top:450px;width:67px;height:17px;background:#C0BFBF;"></div>
<div style="left:626px;top:450px;width:46px;height:17px;background:#C0BFBF;"></div>
<div style="left:692px;top:450px;width:69px;height:17px;background:#C0BFBF;"></div>
<div style="left:762px;top:450px;width:46px;height:17px;background:#C0BFBF;"></div>
<div style="left:828px;top:450px;width:67px;height:17px;background:#C0BFBF;"></div>
<div style="left:898px;top:450px;width:46px;height:17px;background:#C0BFBF;"></div>
<div style="left:296px;top:467px;width:664px;height:1px;background:#000;"></div>
<div style="left:298px;top:450px;font-size:11px;line-height:14px;color:#000;font-weight:normal;white-space:nowrap;letter-spacing:-0.2px;">-</div>
<div style="left:307px;top:450px;font-size:11px;line-height:14px;color:#000;font-weight:normal;white-space:nowrap;letter-spacing:-0.2px;">CAT 775 D1</div>
<div style="left:488px;top:450px;font-size:11px;line-height:14px;color:#000;font-weight:normal;white-space:nowrap;letter-spacing:-0.2px;">775D1</div>
<div style="left:220px;top:450px;width:400px;text-align:right;font-size:12px;line-height:15px;color:#000;font-weight:bold;white-space:nowrap;">8515</div>
<div style="left:629px;top:450px;font-size:12px;line-height:15px;color:#000;font-weight:bold;white-space:nowrap;">t</div>
<div style="left:357px;top:450px;width:400px;text-align:right;font-size:12px;line-height:15px;color:#000;font-weight:bold;white-space:nowrap;">35,5</div>
<div style="left:764px;top:450px;font-size:12px;line-height:15px;color:#000;font-weight:bold;white-space:nowrap;">h</div>
<div style="left:492px;top:450px;width:400px;text-align:right;font-size:12px;line-height:15px;color:#000;font-weight:bold;white-space:nowrap;">239,9</div>
<div style="left:901px;top:450px;font-size:12px;line-height:15px;color:#000;font-weight:bold;white-space:nowrap;letter-spacing:0.8px;">t/h</div>
<div style="left:297px;top:468px;width:180px;height:17px;background:#C0BFBF;"></div>
<div style="left:485px;top:468px;width:61px;height:17px;background:#C0BFBF;"></div>
<div style="left:556px;top:468px;width:67px;height:17px;background:#C0BFBF;"></div>
<div style="left:626px;top:468px;width:46px;height:17px;background:#C0BFBF;"></div>
<div style="left:692px;top:468px;width:69px;height:17px;background:#C0BFBF;"></div>
<div style="left:762px;top:468px;width:46px;height:17px;background:#C0BFBF;"></div>
<div style="left:828px;top:468px;width:67px;height:17px;background:#C0BFBF;"></div>
<div style="left:898px;top:468px;width:46px;height:17px;background:#C0BFBF;"></div>
<div style="left:296px;top:485px;width:664px;height:1px;background:#000;"></div>
<div style="left:298px;top:468px;font-size:11px;line-height:14px;color:#000;font-weight:normal;white-space:nowrap;letter-spacing:-0.2px;">-</div>
<div style="left:307px;top:468px;font-size:11px;line-height:14px;color:#000;font-weight:normal;white-space:nowrap;letter-spacing:-0.2px;">CAT 775 D2</div>
<div style="left:488px;top:468px;font-size:11px;line-height:14px;color:#000;font-weight:normal;white-space:nowrap;letter-spacing:-0.2px;">775D2</div>
<div style="left:220px;top:468px;width:400px;text-align:right;font-size:12px;line-height:15px;color:#000;font-weight:bold;white-space:nowrap;">7735</div>
<div style="left:629px;top:468px;font-size:12px;line-height:15px;color:#000;font-weight:bold;white-space:nowrap;">t</div>
<div style="left:357px;top:468px;width:400px;text-align:right;font-size:12px;line-height:15px;color:#000;font-weight:bold;white-space:nowrap;">29,8</div>
<div style="left:764px;top:468px;font-size:12px;line-height:15px;color:#000;font-weight:bold;white-space:nowrap;">h</div>
<div style="left:492px;top:468px;width:400px;text-align:right;font-size:12px;line-height:15px;color:#000;font-weight:bold;white-space:nowrap;">259,6</div>
<div style="left:901px;top:468px;font-size:12px;line-height:15px;color:#000;font-weight:bold;white-space:nowrap;letter-spacing:0.8px;">t/h</div>
<div style="left:297px;top:486px;width:180px;height:17px;background:#C0BFBF;"></div>
<div style="left:485px;top:486px;width:61px;height:17px;background:#C0BFBF;"></div>
<div style="left:556px;top:486px;width:67px;height:17px;background:#C0BFBF;"></div>
<div style="left:626px;top:486px;width:46px;height:17px;background:#C0BFBF;"></div>
<div style="left:692px;top:486px;width:69px;height:17px;background:#C0BFBF;"></div>
<div style="left:762px;top:486px;width:46px;height:17px;background:#C0BFBF;"></div>
<div style="left:828px;top:486px;width:67px;height:17px;background:#C0BFBF;"></div>
<div style="left:898px;top:486px;width:46px;height:17px;background:#C0BFBF;"></div>
<div style="left:296px;top:503px;width:664px;height:1px;background:#000;"></div>
<div style="left:298px;top:486px;font-size:11px;line-height:14px;color:#000;font-weight:normal;white-space:nowrap;letter-spacing:-0.2px;">-</div>
<div style="left:307px;top:486px;font-size:11px;line-height:14px;color:#000;font-weight:normal;white-space:nowrap;letter-spacing:-0.2px;">Wabco B 50</div>
<div style="left:488px;top:486px;font-size:11px;line-height:14px;color:#000;font-weight:normal;white-space:nowrap;letter-spacing:-0.2px;">Wabco</div>
<div style="left:220px;top:486px;width:400px;text-align:right;font-size:12px;line-height:15px;color:#000;font-weight:bold;white-space:nowrap;">1625</div>
<div style="left:629px;top:486px;font-size:12px;line-height:15px;color:#000;font-weight:bold;white-space:nowrap;">t</div>
<div style="left:357px;top:486px;width:400px;text-align:right;font-size:12px;line-height:15px;color:#000;font-weight:bold;white-space:nowrap;"></div>
<div style="left:764px;top:486px;font-size:12px;line-height:15px;color:#000;font-weight:bold;white-space:nowrap;">h</div>
<div style="left:492px;top:486px;width:400px;text-align:right;font-size:12px;line-height:15px;color:#000;font-weight:bold;white-space:nowrap;"></div>
<div style="left:901px;top:486px;font-size:12px;line-height:15px;color:#000;font-weight:bold;white-space:nowrap;letter-spacing:0.8px;">t/h</div>
<div style="left:297px;top:504px;width:180px;height:17px;background:#C0BFBF;"></div>
<div style="left:485px;top:504px;width:61px;height:17px;background:#C0BFBF;"></div>
<div style="left:556px;top:504px;width:67px;height:17px;background:#C0BFBF;"></div>
<div style="left:626px;top:504px;width:46px;height:17px;background:#C0BFBF;"></div>
<div style="left:692px;top:504px;width:69px;height:17px;background:#C0BFBF;"></div>
<div style="left:762px;top:504px;width:46px;height:17px;background:#C0BFBF;"></div>
<div style="left:828px;top:504px;width:67px;height:17px;background:#C0BFBF;"></div>
<div style="left:898px;top:504px;width:46px;height:17px;background:#C0BFBF;"></div>
<div style="left:296px;top:521px;width:664px;height:1px;background:#000;"></div>
<div style="left:298px;top:504px;font-size:11px;line-height:14px;color:#000;font-weight:normal;white-space:nowrap;letter-spacing:-0.2px;">Bohren</div>
<div style="left:297px;top:522px;width:180px;height:17px;background:#C0BFBF;"></div>
<div style="left:485px;top:522px;width:61px;height:17px;background:#C0BFBF;"></div>
<div style="left:556px;top:522px;width:67px;height:17px;background:#C0BFBF;"></div>
<div style="left:626px;top:522px;width:46px;height:17px;background:#C0BFBF;"></div>
<div style="left:692px;top:522px;width:69px;height:17px;background:#C0BFBF;"></div>
<div style="left:762px;top:522px;width:46px;height:17px;background:#C0BFBF;"></div>
<div style="left:828px;top:522px;width:67px;height:17px;background:#C0BFBF;"></div>
<div style="left:898px;top:522px;width:46px;height:17px;background:#C0BFBF;"></div>
<div style="left:296px;top:539px;width:664px;height:1px;background:#000;"></div>
<div style="left:298px;top:522px;font-size:11px;line-height:14px;color:#000;font-weight:normal;white-space:nowrap;letter-spacing:-0.2px;">-</div>
<div style="left:307px;top:522px;font-size:11px;line-height:14px;color:#000;font-weight:normal;white-space:nowrap;letter-spacing:-0.2px;">DTC 122</div>
<div style="left:488px;top:522px;font-size:11px;line-height:14px;color:#000;font-weight:normal;white-space:nowrap;letter-spacing:-0.2px;">DTC122</div>
<div style="left:220px;top:522px;width:400px;text-align:right;font-size:12px;line-height:15px;color:#000;font-weight:bold;white-space:nowrap;">100</div>
<div style="left:629px;top:522px;font-size:12px;line-height:15px;color:#000;font-weight:bold;white-space:nowrap;">m</div>
<div style="left:357px;top:522px;width:400px;text-align:right;font-size:12px;line-height:15px;color:#000;font-weight:bold;white-space:nowrap;">15</div>
<div style="left:764px;top:522px;font-size:12px;line-height:15px;color:#000;font-weight:bold;white-space:nowrap;">h</div>
<div style="left:492px;top:522px;width:400px;text-align:right;font-size:12px;line-height:15px;color:#000;font-weight:bold;white-space:nowrap;">6,7</div>
<div style="left:901px;top:522px;font-size:12px;line-height:15px;color:#000;font-weight:bold;white-space:nowrap;letter-spacing:0.8px;">m/h</div>
<div style="left:297px;top:540px;width:180px;height:17px;background:#C0BFBF;"></div>
<div style="left:485px;top:540px;width:61px;height:17px;background:#C0BFBF;"></div>
<div style="left:556px;top:540px;width:67px;height:17px;background:#C0BFBF;"></div>
<div style="left:626px;top:540px;width:46px;height:17px;background:#C0BFBF;"></div>
<div style="left:692px;top:540px;width:69px;height:17px;background:#C0BFBF;"></div>
<div style="left:762px;top:540px;width:46px;height:17px;background:#C0BFBF;"></div>
<div style="left:828px;top:540px;width:67px;height:17px;background:#C0BFBF;"></div>
<div style="left:898px;top:540px;width:46px;height:17px;background:#C0BFBF;"></div>
<div style="left:296px;top:557px;width:664px;height:1px;background:#000;"></div>
<div style="left:298px;top:540px;font-size:11px;line-height:14px;color:#000;font-weight:normal;white-space:nowrap;letter-spacing:-0.2px;">Brechen</div>
<div style="left:297px;top:558px;width:180px;height:17px;background:#C0BFBF;"></div>
<div style="left:485px;top:558px;width:61px;height:17px;background:#C0BFBF;"></div>
<div style="left:556px;top:558px;width:67px;height:17px;background:#C0BFBF;"></div>
<div style="left:626px;top:558px;width:46px;height:17px;background:#C0BFBF;"></div>
<div style="left:692px;top:558px;width:69px;height:17px;background:#C0BFBF;"></div>
<div style="left:762px;top:558px;width:46px;height:17px;background:#C0BFBF;"></div>
<div style="left:828px;top:558px;width:67px;height:17px;background:#C0BFBF;"></div>
<div style="left:898px;top:558px;width:46px;height:17px;background:#C0BFBF;"></div>
<div style="left:296px;top:575px;width:664px;height:1px;background:#000;"></div>
<div style="left:298px;top:558px;font-size:11px;line-height:14px;color:#000;font-weight:normal;white-space:nowrap;letter-spacing:-0.2px;">-</div>
<div style="left:307px;top:558px;font-size:11px;line-height:14px;color:#000;font-weight:normal;white-space:nowrap;letter-spacing:-0.2px;">Brecher</div>
<div style="left:488px;top:558px;font-size:11px;line-height:14px;color:#000;font-weight:normal;white-space:nowrap;letter-spacing:-0.2px;">Br</div>
<div style="left:220px;top:558px;width:400px;text-align:right;font-size:12px;line-height:15px;color:#000;font-weight:bold;white-space:nowrap;">25696,1</div>
<div style="left:629px;top:558px;font-size:12px;line-height:15px;color:#000;font-weight:bold;white-space:nowrap;">t</div>
<div style="left:357px;top:558px;width:400px;text-align:right;font-size:12px;line-height:15px;color:#000;font-weight:bold;white-space:nowrap;">64,1</div>
<div style="left:764px;top:558px;font-size:12px;line-height:15px;color:#000;font-weight:bold;white-space:nowrap;">h</div>
<div style="left:492px;top:558px;width:400px;text-align:right;font-size:12px;line-height:15px;color:#000;font-weight:bold;white-space:nowrap;">400,9</div>
<div style="left:901px;top:558px;font-size:12px;line-height:15px;color:#000;font-weight:bold;white-space:nowrap;letter-spacing:0.8px;">t/h</div>
<div style="left:961px;top:360px;width:15px;height:16px;background:#D5D3CC;"></div>
<div style="left:961px;top:360px;width:15px;height:1px;background:#FFFFFF;"></div>
<div style="left:961px;top:360px;width:1px;height:16px;background:#FFFFFF;"></div>
<div style="left:961px;top:375px;width:15px;height:1px;background:#000;"></div>
<div style="left:975px;top:360px;width:1px;height:16px;background:#000;"></div>
<div style="left:962px;top:374px;width:13px;height:1px;background:#808080;"></div>
<div style="left:974px;top:361px;width:1px;height:14px;background:#808080;"></div>
<div style="left:964px;top:366px;width:0;height:0;border-left:3.5px solid transparent;border-right:3.5px solid transparent;border-bottom:4px solid #000;"></div>
<div style="left:961px;top:376px;width:1px;height:249px;background:#FFFFFF;"></div>
<div style="left:961px;top:625px;width:15px;height:16px;background:#D5D3CC;"></div>
<div style="left:961px;top:625px;width:15px;height:1px;background:#FFFFFF;"></div>
<div style="left:961px;top:625px;width:1px;height:16px;background:#FFFFFF;"></div>
<div style="left:961px;top:640px;width:15px;height:1px;background:#000;"></div>
<div style="left:975px;top:625px;width:1px;height:16px;background:#000;"></div>
<div style="left:962px;top:639px;width:13px;height:1px;background:#808080;"></div>
<div style="left:974px;top:626px;width:1px;height:14px;background:#808080;"></div>
<div style="left:964px;top:631px;width:0;height:0;border-left:3.5px solid transparent;border-right:3.5px solid transparent;border-top:4px solid #000;"></div>
<div style="left:6px;top:673px;width:999px;height:1px;background:#000;"></div>
<div style="left:6px;top:674px;width:999px;height:36px;background:rgb(58,126,140);"></div>
<div style="left:29px;top:677px;width:99px;height:29px;background:#D5D3CC;"></div>
<div style="left:29px;top:677px;width:99px;height:1px;background:#FFFFFF;"></div>
<div style="left:29px;top:677px;width:1px;height:29px;background:#FFFFFF;"></div>
<div style="left:29px;top:705px;width:99px;height:1px;background:#000;"></div>
<div style="left:127px;top:677px;width:1px;height:29px;background:#000;"></div>
<div style="left:30px;top:704px;width:97px;height:1px;background:#808080;"></div>
<div style="left:126px;top:678px;width:1px;height:27px;background:#808080;"></div>
<div style="left:29px;top:685px;width:99px;text-align:center;font-size:12px;line-height:15px;color:#000;font-weight:normal;white-space:nowrap;letter-spacing:-0.4px;">EXIT</div>
<div style="left:927px;top:677px;width:61px;height:29px;background:#D5D3CC;"></div>
<div style="left:927px;top:677px;width:61px;height:1px;background:#FFFFFF;"></div>
<div style="left:927px;top:677px;width:1px;height:29px;background:#FFFFFF;"></div>
<div style="left:927px;top:705px;width:61px;height:1px;background:#000;"></div>
<div style="left:987px;top:677px;width:1px;height:29px;background:#000;"></div>
<div style="left:928px;top:704px;width:59px;height:1px;background:#808080;"></div>
<div style="left:986px;top:678px;width:1px;height:27px;background:#808080;"></div>
<div style="left:927px;top:684px;width:61px;text-align:center;font-size:14px;line-height:17px;color:#0000FF;font-weight:normal;white-space:nowrap;letter-spacing:-0.3px;">help</div>
<div style="left:13px;top:714px;width:763px;height:1px;background:#808080;"></div>
<div style="left:13px;top:714px;width:1px;height:16px;background:#808080;"></div>
<div style="left:13px;top:729px;width:763px;height:1px;background:#FFFFFF;"></div>
<div style="left:775px;top:714px;width:1px;height:16px;background:#FFFFFF;"></div>
<div style="left:14px;top:715px;font-size:11px;line-height:14px;color:#000;font-weight:normal;white-space:nowrap;letter-spacing:-0.2px;">Formularansicht</div>
<div style="left:793px;top:714px;width:28px;height:1px;background:#808080;"></div>
<div style="left:793px;top:714px;width:1px;height:16px;background:#808080;"></div>
<div style="left:793px;top:729px;width:28px;height:1px;background:#FFFFFF;"></div>
<div style="left:820px;top:714px;width:1px;height:16px;background:#FFFFFF;"></div>
<div style="left:824px;top:714px;width:27px;height:1px;background:#808080;"></div>
<div style="left:824px;top:714px;width:1px;height:16px;background:#808080;"></div>
<div style="left:824px;top:729px;width:27px;height:1px;background:#FFFFFF;"></div>
<div style="left:850px;top:714px;width:1px;height:16px;background:#FFFFFF;"></div>
<div style="left:853px;top:714px;width:28px;height:1px;background:#808080;"></div>
<div style="left:853px;top:714px;width:1px;height:16px;background:#808080;"></div>
<div style="left:853px;top:729px;width:28px;height:1px;background:#FFFFFF;"></div>
<div style="left:880px;top:714px;width:1px;height:16px;background:#FFFFFF;"></div>
<div style="left:883px;top:714px;width:39px;height:1px;background:#808080;"></div>
<div style="left:883px;top:714px;width:1px;height:16px;background:#808080;"></div>
<div style="left:883px;top:729px;width:39px;height:1px;background:#FFFFFF;"></div>
<div style="left:921px;top:714px;width:1px;height:16px;background:#FFFFFF;"></div>
<div style="left:924px;top:714px;width:18px;height:1px;background:#808080;"></div>
<div style="left:924px;top:714px;width:1px;height:16px;background:#808080;"></div>
<div style="left:924px;top:729px;width:18px;height:1px;background:#FFFFFF;"></div>
<div style="left:941px;top:714px;width:1px;height:16px;background:#FFFFFF;"></div>
<div style="left:944px;top:714px;width:18px;height:1px;background:#808080;"></div>
<div style="left:944px;top:714px;width:1px;height:16px;background:#808080;"></div>
<div style="left:944px;top:729px;width:18px;height:1px;background:#FFFFFF;"></div>
<div style="left:961px;top:714px;width:1px;height:16px;background:#FFFFFF;"></div>
<div style="left:964px;top:714px;width:18px;height:1px;background:#808080;"></div>
<div style="left:964px;top:714px;width:1px;height:16px;background:#808080;"></div>
<div style="left:964px;top:729px;width:18px;height:1px;background:#FFFFFF;"></div>
<div style="left:981px;top:714px;width:1px;height:16px;background:#FFFFFF;"></div>
<div style="left:925px;top:715px;font-size:11px;line-height:14px;color:#000;font-weight:normal;white-space:nowrap;">NF</div>
<svg style="position:absolute;left:959px;top:15px" width="6" height="2" viewBox="0 0 6 2" shape-rendering="crispEdges"><rect x="0" y="0" width="6" height="2" fill="#000"/></svg>
<svg style="position:absolute;left:974px;top:8px" width="9" height="9" viewBox="0 0 9 9" shape-rendering="crispEdges"><rect x="0" y="0" width="9" height="2" fill="#000"/><rect x="0" y="0" width="1" height="9" fill="#000"/><rect x="8" y="0" width="1" height="9" fill="#000"/><rect x="0" y="8" width="9" height="1" fill="#000"/></svg>
<svg style="position:absolute;left:993px;top:9px" width="8" height="7" viewBox="0 0 8 7" shape-rendering="crispEdges"><rect x="0" y="0" width="1" height="1" fill="#000"/><rect x="1" y="0" width="1" height="1" fill="#000"/><rect x="6" y="0" width="1" height="1" fill="#000"/><rect x="7" y="0" width="1" height="1" fill="#000"/><rect x="1" y="1" width="1" height="1" fill="#000"/><rect x="2" y="1" width="1" height="1" fill="#000"/><rect x="5" y="1" width="1" height="1" fill="#000"/><rect x="6" y="1" width="1" height="1" fill="#000"/><rect x="2" y="2" width="1" height="1" fill="#000"/><rect x="3" y="2" width="1" height="1" fill="#000"/><rect x="4" y="2" width="1" height="1" fill="#000"/><rect x="5" y="2" width="1" height="1" fill="#000"/><rect x="3" y="3" width="1" height="1" fill="#000"/><rect x="4" y="3" width="1" height="1" fill="#000"/><rect x="2" y="4" width="1" height="1" fill="#000"/><rect x="3" y="4" width="1" height="1" fill="#000"/><rect x="4" y="4" width="1" height="1" fill="#000"/><rect x="5" y="4" width="1" height="1" fill="#000"/><rect x="1" y="5" width="1" height="1" fill="#000"/><rect x="2" y="5" width="1" height="1" fill="#000"/><rect x="5" y="5" width="1" height="1" fill="#000"/><rect x="6" y="5" width="1" height="1" fill="#000"/><rect x="0" y="6" width="1" height="1" fill="#000"/><rect x="1" y="6" width="1" height="1" fill="#000"/><rect x="6" y="6" width="1" height="1" fill="#000"/><rect x="7" y="6" width="1" height="1" fill="#000"/></svg>
<svg style="position:absolute;left:959px;top:36px" width="6" height="2" viewBox="0 0 6 2" shape-rendering="crispEdges"><rect x="0" y="0" width="6" height="2" fill="#000"/></svg>
<svg style="position:absolute;left:974px;top:29px" width="9" height="9" viewBox="0 0 9 9" shape-rendering="crispEdges"><rect x="3" y="0" width="6" height="2" fill="#000"/><rect x="3" y="0" width="1" height="3" fill="#000"/><rect x="8" y="0" width="1" height="6" fill="#000"/><rect x="6" y="5" width="3" height="1" fill="#000"/><rect x="0" y="3" width="6" height="2" fill="#000"/><rect x="0" y="3" width="1" height="6" fill="#000"/><rect x="5" y="3" width="1" height="6" fill="#000"/><rect x="0" y="8" width="6" height="1" fill="#000"/></svg>
<svg style="position:absolute;left:993px;top:30px" width="8" height="7" viewBox="0 0 8 7" shape-rendering="crispEdges"><rect x="0" y="0" width="1" height="1" fill="#000"/><rect x="1" y="0" width="1" height="1" fill="#000"/><rect x="6" y="0" width="1" height="1" fill="#000"/><rect x="7" y="0" width="1" height="1" fill="#000"/><rect x="1" y="1" width="1" height="1" fill="#000"/><rect x="2" y="1" width="1" height="1" fill="#000"/><rect x="5" y="1" width="1" height="1" fill="#000"/><rect x="6" y="1" width="1" height="1" fill="#000"/><rect x="2" y="2" width="1" height="1" fill="#000"/><rect x="3" y="2" width="1" height="1" fill="#000"/><rect x="4" y="2" width="1" height="1" fill="#000"/><rect x="5" y="2" width="1" height="1" fill="#000"/><rect x="3" y="3" width="1" height="1" fill="#000"/><rect x="4" y="3" width="1" height="1" fill="#000"/><rect x="2" y="4" width="1" height="1" fill="#000"/><rect x="3" y="4" width="1" height="1" fill="#000"/><rect x="4" y="4" width="1" height="1" fill="#000"/><rect x="5" y="4" width="1" height="1" fill="#000"/><rect x="1" y="5" width="1" height="1" fill="#000"/><rect x="2" y="5" width="1" height="1" fill="#000"/><rect x="5" y="5" width="1" height="1" fill="#000"/><rect x="6" y="5" width="1" height="1" fill="#000"/><rect x="0" y="6" width="1" height="1" fill="#000"/><rect x="1" y="6" width="1" height="1" fill="#000"/><rect x="6" y="6" width="1" height="1" fill="#000"/><rect x="7" y="6" width="1" height="1" fill="#000"/></svg>
<svg style="position:absolute;left:17px;top:28px" width="13" height="12" viewBox="0 0 13 12" shape-rendering="crispEdges"><rect x="0" y="0" width="13" height="12" fill="#000"/><rect x="1" y="0" width="11" height="2" fill="#0000A0"/><rect x="1" y="2" width="11" height="9" fill="#FFF"/><rect x="2" y="3" width="3" height="1" fill="#000"/><rect x="2" y="7" width="3" height="1" fill="#000"/><rect x="6" y="3" width="5" height="3" fill="#000"/><rect x="6" y="7" width="5" height="3" fill="#000"/><rect x="7" y="4" width="3" height="1" fill="#FFF"/><rect x="7" y="8" width="3" height="1" fill="#FFF"/><rect x="2" y="5" width="1" height="1" fill="#A0A0A0"/><rect x="4" y="5" width="1" height="1" fill="#A0A0A0"/><rect x="2" y="9" width="1" height="1" fill="#A0A0A0"/><rect x="4" y="9" width="1" height="1" fill="#A0A0A0"/></svg>
<svg style="position:absolute;left:4px;top:4px" width="19" height="18" viewBox="0 0 19 18" shape-rendering="crispEdges"><g shape-rendering="auto"><path d="M9.5 8.5 L16 15" stroke="#000" stroke-width="4.6" stroke-linecap="round"/><path d="M9.5 8.5 L16 15" stroke="#FFFF00" stroke-width="2.6" stroke-linecap="round"/><path d="M10 10.5 L15.5 16" stroke="#E0E0C0" stroke-width="0.8"/><polygon points="2.5,6 7,1.5 9,1.5 12.5,5 12.5,7 8,11.5 6,11.5 2.5,8" fill="#FFFF00" stroke="#000" stroke-width="1"/><path d="M4.5 5.5 L7 3" stroke="#000" stroke-width="1.6"/><path d="M6 9 L10 5" stroke="#A0A000" stroke-width="0.9"/></g></svg>
<svg style="position:absolute;left:0px;top:0px" width="1011" height="735" viewBox="0 0 1011 735" shape-rendering="crispEdges"><rect x="316" y="336" width="13" height="1" fill="#000"/><rect x="316" y="340" width="13" height="1" fill="#000"/><rect x="314" y="338" width="1" height="1" fill="#000"/><rect x="315" y="337" width="1" height="1" fill="#000"/><rect x="316" y="336" width="1" height="1" fill="#000"/><rect x="317" y="335" width="1" height="1" fill="#000"/><rect x="318" y="334" width="1" height="1" fill="#000"/><rect x="315" y="339" width="1" height="1" fill="#000"/><rect x="316" y="340" width="1" height="1" fill="#000"/><rect x="317" y="341" width="1" height="1" fill="#000"/><rect x="318" y="342" width="1" height="1" fill="#000"/><rect x="372" y="336" width="13" height="1" fill="#000"/><rect x="372" y="340" width="13" height="1" fill="#000"/><rect x="386" y="338" width="1" height="1" fill="#000"/><rect x="385" y="337" width="1" height="1" fill="#000"/><rect x="384" y="336" width="1" height="1" fill="#000"/><rect x="383" y="335" width="1" height="1" fill="#000"/><rect x="382" y="334" width="1" height="1" fill="#000"/><rect x="385" y="339" width="1" height="1" fill="#000"/><rect x="384" y="340" width="1" height="1" fill="#000"/><rect x="383" y="341" width="1" height="1" fill="#000"/><rect x="382" y="342" width="1" height="1" fill="#000"/></svg>
<svg style="position:absolute;left:0px;top:0px" width="1011" height="735" viewBox="0 0 1011 735" shape-rendering="crispEdges"><rect x="995" y="731" width="2" height="1" fill="#808080"/><rect x="996" y="730" width="2" height="1" fill="#808080"/><rect x="997" y="729" width="2" height="1" fill="#808080"/><rect x="998" y="728" width="2" height="1" fill="#808080"/><rect x="999" y="727" width="2" height="1" fill="#808080"/><rect x="1000" y="726" width="2" height="1" fill="#808080"/><rect x="1001" y="725" width="2" height="1" fill="#808080"/><rect x="1002" y="724" width="2" height="1" fill="#808080"/><rect x="1003" y="723" width="2" height="1" fill="#808080"/><rect x="1004" y="722" width="2" height="1" fill="#808080"/><rect x="1005" y="721" width="2" height="1" fill="#808080"/><rect x="1006" y="720" width="2" height="1" fill="#808080"/><rect x="1007" y="719" width="2" height="1" fill="#808080"/><rect x="999" y="731" width="2" height="1" fill="#808080"/><rect x="1000" y="730" width="2" height="1" fill="#808080"/><rect x="1001" y="729" width="2" height="1" fill="#808080"/><rect x="1002" y="728" width="2" height="1" fill="#808080"/><rect x="1003" y="727" width="2" height="1" fill="#808080"/><rect x="1004" y="726" width="2" height="1" fill="#808080"/><rect x="1005" y="725" width="2" height="1" fill="#808080"/><rect x="1006" y="724" width="2" height="1" fill="#808080"/><rect x="1007" y="723" width="2" height="1" fill="#808080"/><rect x="1003" y="731" width="2" height="1" fill="#808080"/><rect x="1004" y="730" width="2" height="1" fill="#808080"/><rect x="1005" y="729" width="2" height="1" fill="#808080"/><rect x="1006" y="728" width="2" height="1" fill="#808080"/><rect x="1007" y="727" width="2" height="1" fill="#808080"/><rect x="994" y="731" width="1" height="1" fill="#FFFFFF"/><rect x="995" y="730" width="1" height="1" fill="#FFFFFF"/><rect x="996" y="729" width="1" height="1" fill="#FFFFFF"/><rect x="997" y="728" width="1" height="1" fill="#FFFFFF"/><rect x="998" y="727" width="1" height="1" fill="#FFFFFF"/><rect x="999" y="726" width="1" height="1" fill="#FFFFFF"/><rect x="1000" y="725" width="1" height="1" fill="#FFFFFF"/><rect x="1001" y="724" width="1" height="1" fill="#FFFFFF"/><rect x="1002" y="723" width="1" height="1" fill="#FFFFFF"/><rect x="1003" y="722" width="1" height="1" fill="#FFFFFF"/><rect x="1004" y="721" width="1" height="1" fill="#FFFFFF"/><rect x="1005" y="720" width="1" height="1" fill="#FFFFFF"/><rect x="1006" y="719" width="1" height="1" fill="#FFFFFF"/><rect x="998" y="731" width="1" height="1" fill="#FFFFFF"/><rect x="999" y="730" width="1" height="1" fill="#FFFFFF"/><rect x="1000" y="729" width="1" height="1" fill="#FFFFFF"/><rect x="1001" y="728" width="1" height="1" fill="#FFFFFF"/><rect x="1002" y="727" width="1" height="1" fill="#FFFFFF"/><rect x="1003" y="726" width="1" height="1" fill="#FFFFFF"/><rect x="1004" y="725" width="1" height="1" fill="#FFFFFF"/><rect x="1005" y="724" width="1" height="1" fill="#FFFFFF"/><rect x="1006" y="723" width="1" height="1" fill="#FFFFFF"/><rect x="1002" y="731" width="1" height="1" fill="#FFFFFF"/><rect x="1003" y="730" width="1" height="1" fill="#FFFFFF"/><rect x="1004" y="729" width="1" height="1" fill="#FFFFFF"/><rect x="1005" y="728" width="1" height="1" fill="#FFFFFF"/><rect x="1006" y="727" width="1" height="1" fill="#FFFFFF"/></svg>
</body></html>
